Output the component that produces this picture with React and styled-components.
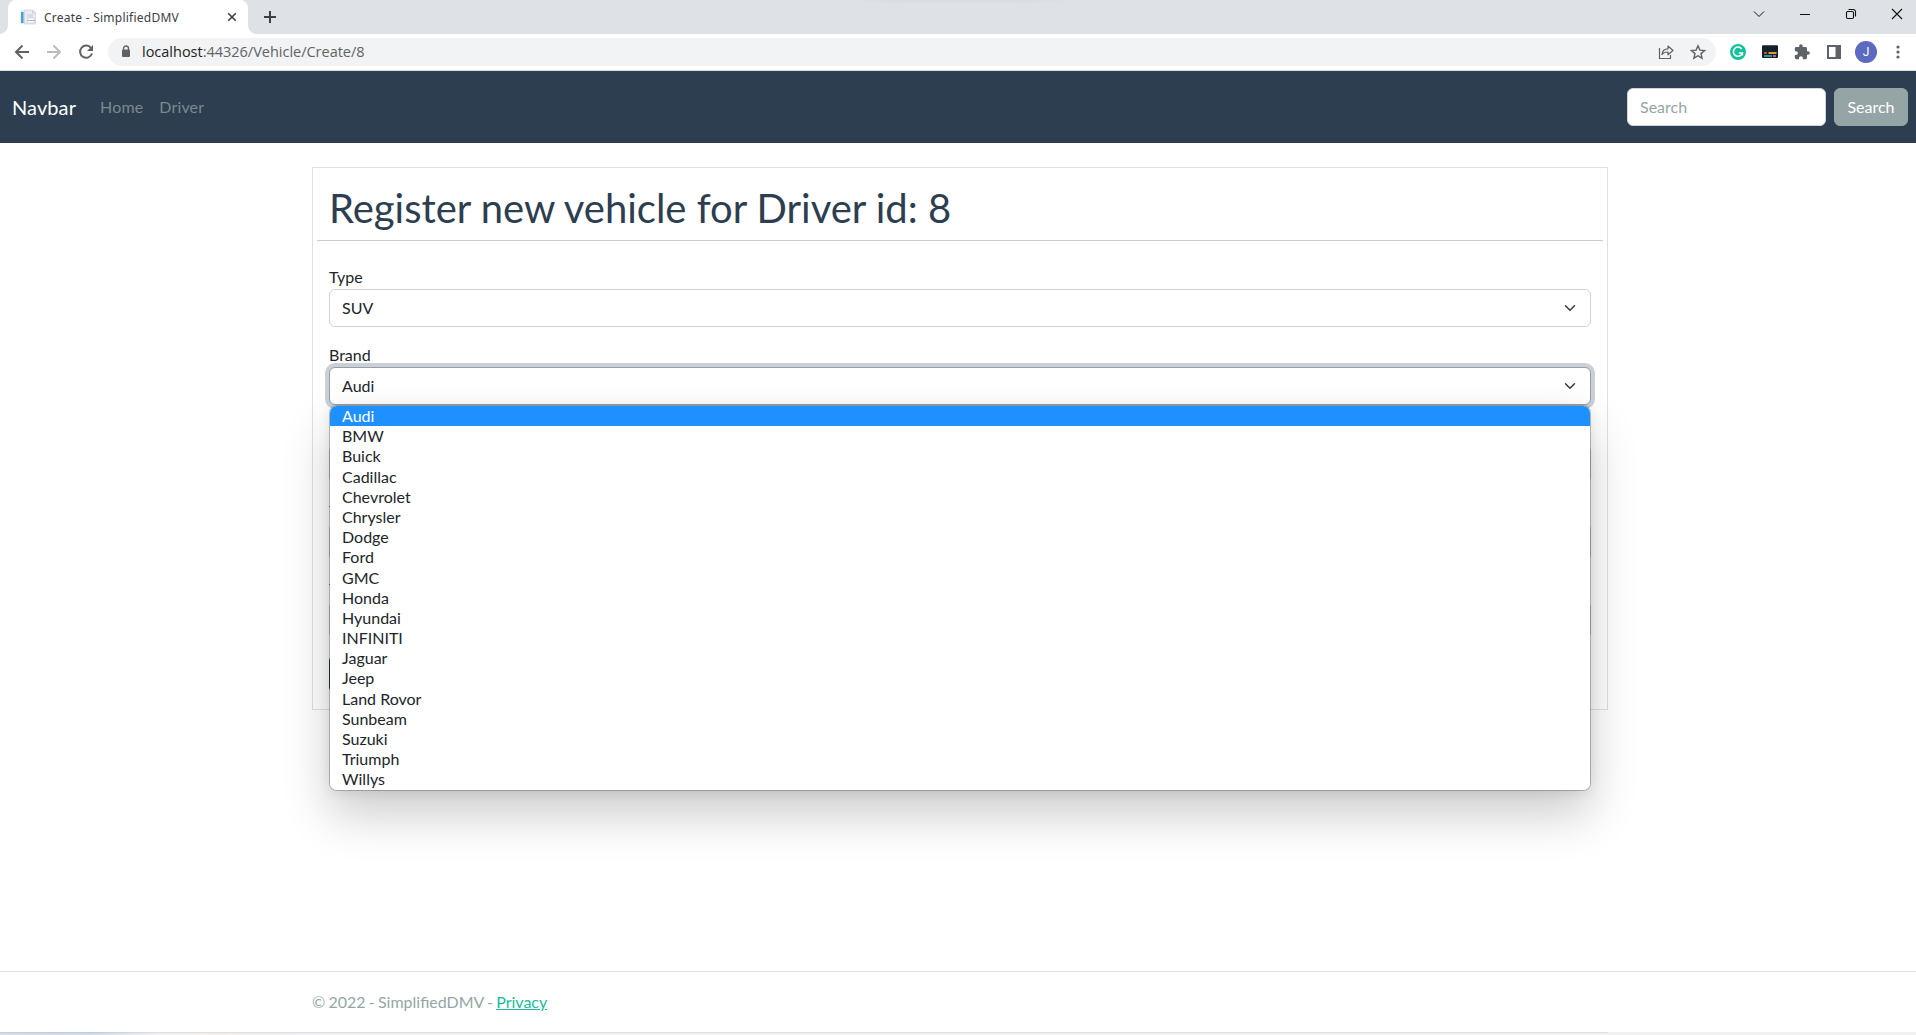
import React from 'react';
import styled, { createGlobalStyle, css } from 'styled-components';

const GlobalStyle = createGlobalStyle`
  *, *::before, *::after { box-sizing: border-box; }
  html, body { margin: 0; overflow: hidden; background: #fff; }
  body { font-family: Lato, sans-serif; font-size: 16px; line-height: 24px; color: #212529; }
`;

const Window = styled.div`
  width: 1920px;
  height: 1035px;
  display: flex;
  flex-direction: column;
  overflow: hidden;
`;

/* browser frame */
const TabStrip = styled.div`
  height: 34px;
  flex: none;
  display: flex;
  background: radial-gradient(ellipse 116px 4px at 961px 0, #d9dce1 60%, transparent), #dee1e6;
`;
const Tab = styled.div`
  position: relative;
  width: 240px;
  height: 34px;
  margin-left: 8px;
  padding: 0 11px 0 12px;
  display: flex;
  align-items: center;
  background: #fff;
  border-radius: 8px 8px 0 0;
  &::before, &::after {
    content: '';
    position: absolute;
    bottom: 0;
    width: 8px;
    height: 8px;
  }
  &::before { left: -8px; background: radial-gradient(circle at 0 0, transparent 7.5px, #fff 8px); }
  &::after { right: -8px; background: radial-gradient(circle at 100% 0, transparent 7.5px, #fff 8px); }
`;
const TabTitle = styled.span`
  flex: 1;
  margin-left: 8px;
  padding-top: 1px;
  font: 12px/16px 'Noto Sans', sans-serif;
  letter-spacing: 0.24px;
  color: #3c4043;
  white-space: nowrap;
`;
const NewTab = styled.div`
  display: flex;
  align-items: center;
  padding-left: 15px;
  flex: 1;
`;
const WindowControls = styled.div`
  display: flex;
  align-items: flex-start;
  gap: 30px;
  padding: 6px 15px 0 0;
`;
const Toolbar = styled.div`
  height: 37px;
  flex: none;
  display: flex;
  align-items: center;
  padding-left: 12px;
  border-bottom: 1px solid #dadce0;
`;
const NavIcons = styled.div`
  display: flex;
  gap: 12px;
`;
const Omnibox = styled.div`
  width: 1608px;
  height: 28px;
  margin-left: 12px;
  padding: 0 8px 0 8px;
  display: flex;
  align-items: center;
  border-radius: 14px;
  background: #f1f3f4;
`;
const Url = styled.span`
  flex: 1;
  margin-left: 6px;
  font: 14.5px/20px 'Open Sans', sans-serif;
  letter-spacing: -0.01px;
  color: #5f6368;
`;
const Host = styled.span`
  color: #202124;
`;
const OmniActions = styled.div`
  display: flex;
  gap: 12px;
`;
const Extensions = styled.div`
  display: flex;
  align-items: center;
  margin-left: 12px;
  gap: 12px;
`;
const Avatar = styled.span`
  width: 22px;
  height: 22px;
  margin: 0 -1px;
  border-radius: 50%;
  background: #5c6bc0;
  color: #fff;
  font: 12px/22px Roboto, sans-serif;
  text-align: center;
`;

/* site header */
const Navbar = styled.nav`
  height: 72px;
  flex: none;
  display: flex;
  align-items: center;
  padding: 0 12px;
  background: #2c3e50;
`;
const Brand = styled.a`
  font-size: 20px;
  line-height: 30px;
  letter-spacing: 0.1px;
  color: #fff;
  margin-right: 16px;
`;
const NavLink = styled.a`
  padding: 8px;
  letter-spacing: 0.15px;
  color: #7b8a8b;
`;
const SearchForm = styled.form`
  display: flex;
  gap: 8px;
  margin-left: auto;
`;
const controlBox = css`
  height: 38px;
  border: 1px solid #ced4da;
  border-radius: 6px;
  padding: 6px 12px;
  font: 16px/24px Lato, sans-serif;
`;
const SearchInput = styled.input`
  ${controlBox}
  width: 199px;
  padding: 5px 12px 7px;
  background: #fff;
  &::placeholder { color: #95a5a6; opacity: 1; }
`;
const SearchButton = styled.button`
  ${controlBox}
  width: 74px;
  padding: 6px 0;
  border-color: #95a5a6;
  background: #95a5a6;
  color: #fff;
`;

/* form card */
const Main = styled.main`
  flex: 1;
  padding: 24px 312px 0;
`;
const Card = styled.section`
  height: 543px;
  border: 1px solid #dee2e6;
  padding: 0 4px;
`;
const Title = styled.h1`
  margin: 0;
  padding: 16px 12px 8px;
  height: 72px;
  font-size: 40px;
  line-height: 48px;
  letter-spacing: -0.02px;
  font-weight: 400;
  color: #2c3e50;
`;
const Divider = styled.hr`
  margin: 0;
  border: 0;
  height: 1px;
  background: #c8cacc;
`;
const Fields = styled.div`
  padding: 24px 12px 0;
`;
const Field = styled.div`
  position: relative;
  margin-bottom: 16px;
`;
const Label = styled.label`
  display: block;
  height: 24px;
`;
const HiddenLabel = styled(Label)`
  &::before {
    content: '';
    display: block;
    width: 1px;
    height: 8px;
    border-bottom: 1px solid ${p => (p.$mark ? '#94714a' : 'transparent')};
  }
`;
const Select = styled.div`
  ${controlBox}
  display: flex;
  align-items: center;
  justify-content: space-between;
  background: #fff;
  color: #212529;
  ${p => p.$focused && css`
    border-color: #969fa8;
    box-shadow: 0 0 0 4px #cad0d5;
  `}
`;
const Submit = styled.div`
  height: 38px;
  width: 90px;
  border-radius: 6px;
  background: #2c3e50;
`;
const Options = styled.ul`
  position: absolute;
  z-index: 2;
  top: 62px;
  left: 0;
  right: 0;
  margin: 0;
  padding: 0 0 0.2px;
  list-style: none;
  border: 1px solid rgba(0, 0, 0, 0.23);
  border-radius: 8px;
  background: #fff;
  background-clip: padding-box;
  overflow: hidden;
  box-shadow: 0 24px 48px rgba(0, 0, 0, 0.2), 0 2px 12px rgba(0, 0, 0, 0.08);
`;
const Option = styled.li`
  height: 20.2px;
  padding-left: 12px;
  line-height: 20.2px;
  background: ${p => (p.$active ? '#1e90ff' : '#fff')};
  color: ${p => (p.$active ? '#fff' : '#212529')};
`;

const Footer = styled.footer`
  height: 61px;
  flex: none;
  padding: 18px 312px 0;
  border-top: 1px solid #dee2e6;
  color: #95a5a6;
  word-spacing: -0.9px;
`;
const PrivacyLink = styled.a`
  color: #18bc9c;
  text-decoration: underline;
`;
const DesktopEdge = styled.div`
  height: 3px;
  flex: none;
  background: linear-gradient(90deg, #d3dce5 0, #d0dae8 90px, #f1f1f2 160px, #f3efeb 220px, #eef0f3 300px, #f1f1f1 500px);
  &::before {
    content: '';
    display: block;
    width: 1608px;
    height: 1px;
    background: rgba(0, 0, 0, 0.07);
  }
`;

const Icon = ({ size = 20, children, color = '#5f6368', w = 1.8 }) => (
  <svg width={size} height={size} viewBox={`0 0 ${size} ${size}`} fill="none" stroke={color} strokeWidth={w}>
    {children}
  </svg>
);

const Chevron = () => (
  <svg width="16" height="12" viewBox="0 0 16 16" fill="none" stroke="#343a40" strokeWidth="2" strokeLinecap="round" strokeLinejoin="round">
    <path d="m2 5 6 6 6-6" />
  </svg>
);

const brands = [
  'Audi', 'BMW', 'Buick', 'Cadillac', 'Chevrolet', 'Chrysler', 'Dodge', 'Ford', 'GMC', 'Honda',
  'Hyundai', 'INFINITI', 'Jaguar', 'Jeep', 'Land Rovor', 'Sunbeam', 'Suzuki', 'Triumph', 'Willys',
];

const BrowserFrame = () => (
  <>
    <TabStrip>
      <Tab>
        <svg width="16" height="16" viewBox="0 0 16 16">
          <rect x="0.5" y="1" width="4" height="14" fill="#dcebf5" />
          <rect x="1" y="3" width="2.5" height="11" fill="#4a9fd4" />
          <path d="M4.5 1h8l3 3v11h-11z" fill="#e9edf1" stroke="#c8ced5" strokeWidth=".7" />
          <path d="M12.5 1v3h3M7 6h6M7 8h6" stroke="#bcc4cd" fill="none" strokeWidth=".7" />
          <path d="M8 9h6v5H7z" fill="#fff" stroke="#c3c9d0" strokeWidth=".6" />
          <path d="M7 11.5h8" stroke="#aeb7c1" />
        </svg>
        <TabTitle>Create - SimplifiedDMV</TabTitle>
        <Icon size={10} color="#3c4043" w={1.6}><path d="m1.2 1.2 7.6 7.6M8.8 1.2 1.2 8.8" /></Icon>
      </Tab>
      <NewTab><Icon size={14} color="#3c4043" w={2}><path d="M7 1v12M1 7h12" /></Icon></NewTab>
      <WindowControls>
        <Icon size={16} color="#111" w={1}><path d="m3 5.500 5 5 5-5" /></Icon>
        <Icon size={16} color="#111" w={1}><path d="M3 8.5h10" /></Icon>
        <Icon size={16} color="#111" w={1.1}>
          <rect x="3.5" y="5.5" width="7" height="7" rx="1.2" />
          <path d="M5.5 3.5h4.7a2.3 2.3 0 0 1 2.3 2.3v4.7" />
        </Icon>
        <Icon size={16} color="#111" w={1.1}><path d="m3 3 10 10M13 3 3 13" /></Icon>
      </WindowControls>
    </TabStrip>
    <Toolbar>
      <NavIcons>
        <Icon w={2}><path d="M17 10H4M10.5 3.5 4 10l6.5 6.5" /></Icon>
        <Icon w={2} color="#b9bbbe"><path d="M3 10h13M9.500 3.500 16 10l-6.500 6.500" /></Icon>
        <Icon w={2}>
          <path d="M15.1 6A6.100 6.100 0 1 0 16 11.500" />
          <path d="M17 3v6h-6z" fill="#5f6368" stroke="none" />
        </Icon>
      </NavIcons>
      <Omnibox>
        <Icon>
          <rect x="6" y="7.500" width="8" height="7.500" rx="1" fill="#5f6368" stroke="none" />
          <path d="M7.500 8V6.500a2.500 2.500 0 0 1 5 0V8" strokeWidth="1.300" />
        </Icon>
        <Url><Host>localhost</Host>:44326/Vehicle/Create/8</Url>
        <OmniActions>
          <Icon w={1.2}>
            <path d="M3.5 6v10.500h11V13" />
            <path d="M6 12.500c.4-4 2.700-5.700 6-5.700V4l5 4.500-5 4.300V10c-2.700 0-4.600.6-6 2.500z" strokeLinejoin="round" />
          </Icon>
          <Icon w={1.4}><path d="m10 3.800 1.900 4.300 4.700.4-3.600 3.100 1.100 4.600-4.100-2.500-4.100 2.500L7 11.600 3.400 8.500l4.700-.4z" /></Icon>
        </OmniActions>
      </Omnibox>
      <Extensions>
        <Icon w={1.5} color="#fff">
          <circle cx="10" cy="10" r="8" fill="#15c39a" stroke="none" />
          <path d="M13.700 7A4.600 4.600 0 1 0 14.400 11H10.800M14.400 10.500v3" />
        </Icon>
        <Icon>
          <rect x="2" y="3.300" width="16" height="12.700" rx="1" fill="#14212b" stroke="none" />
          <path d="M4 11h3" stroke="#e5484d" /><path d="M8.500 11h8" stroke="#f5a83b" />
          <path d="M4 14h8" stroke="#3c9fa0" /><path d="M13 14h3" stroke="#c66bb0" />
        </Icon>
        <svg width="20" height="20" viewBox="-2 -2 28 28" fill="#5f6368">
          <path d="M20.500 11H19V7a2 2 0 0 0-2-2h-4V3.500a2.500 2.500 0 0 0-5 0V5H4a2 2 0 0 0-2 2v3.800h1.500a2.700 2.700 0 0 1 0 5.400H2V20a2 2 0 0 0 2 2h3.800v-1.500a2.700 2.700 0 0 1 5.400 0V22H17a2 2 0 0 0 2-2v-4h1.500a2.500 2.500 0 0 0 0-5z" />
        </svg>
        <Icon w={2}><rect x="4" y="4" width="12" height="12" /><path d="M11.500 4h4.500v12h-4.500z" fill="#5f6368" stroke="none" /></Icon>
        <Avatar>J</Avatar>
        <Icon><g fill="#5f6368" stroke="none"><circle cx="10" cy="5" r="1.600" /><circle cx="10" cy="10" r="1.600" /><circle cx="10" cy="15" r="1.600" /></g></Icon>
      </Extensions>
    </Toolbar>
  </>
);

export default function App() {
  return (
    <Window>
      <GlobalStyle />
      <BrowserFrame />
      <Navbar>
        <Brand>Navbar</Brand>
        <NavLink>Home</NavLink>
        <NavLink>Driver</NavLink>
        <SearchForm>
          <SearchInput placeholder="Search" />
          <SearchButton type="button">Search</SearchButton>
        </SearchForm>
      </Navbar>
      <Main>
        <Card>
          <Title>Register new vehicle for Driver id: 8</Title>
          <Divider />
          <Fields>
            <Field>
              <Label>Type</Label>
              <Select>SUV<Chevron /></Select>
            </Field>
            <Field>
              <Label>Brand</Label>
              <Select $focused>Audi<Chevron /></Select>
              <Options>
                {brands.map((b, i) => <Option key={b} $active={i === 0}>{b}</Option>)}
              </Options>
            </Field>
            {[false, true, true].map((mark, i) => (
              <Field key={i}>
                <HiddenLabel $mark={mark} />
                <Select />
              </Field>
            ))}
            <Submit />
          </Fields>
        </Card>
      </Main>
      <Footer>© 2022 - SimplifiedDMV - <PrivacyLink>Privacy</PrivacyLink></Footer>
      <DesktopEdge />
    </Window>
  );
}
